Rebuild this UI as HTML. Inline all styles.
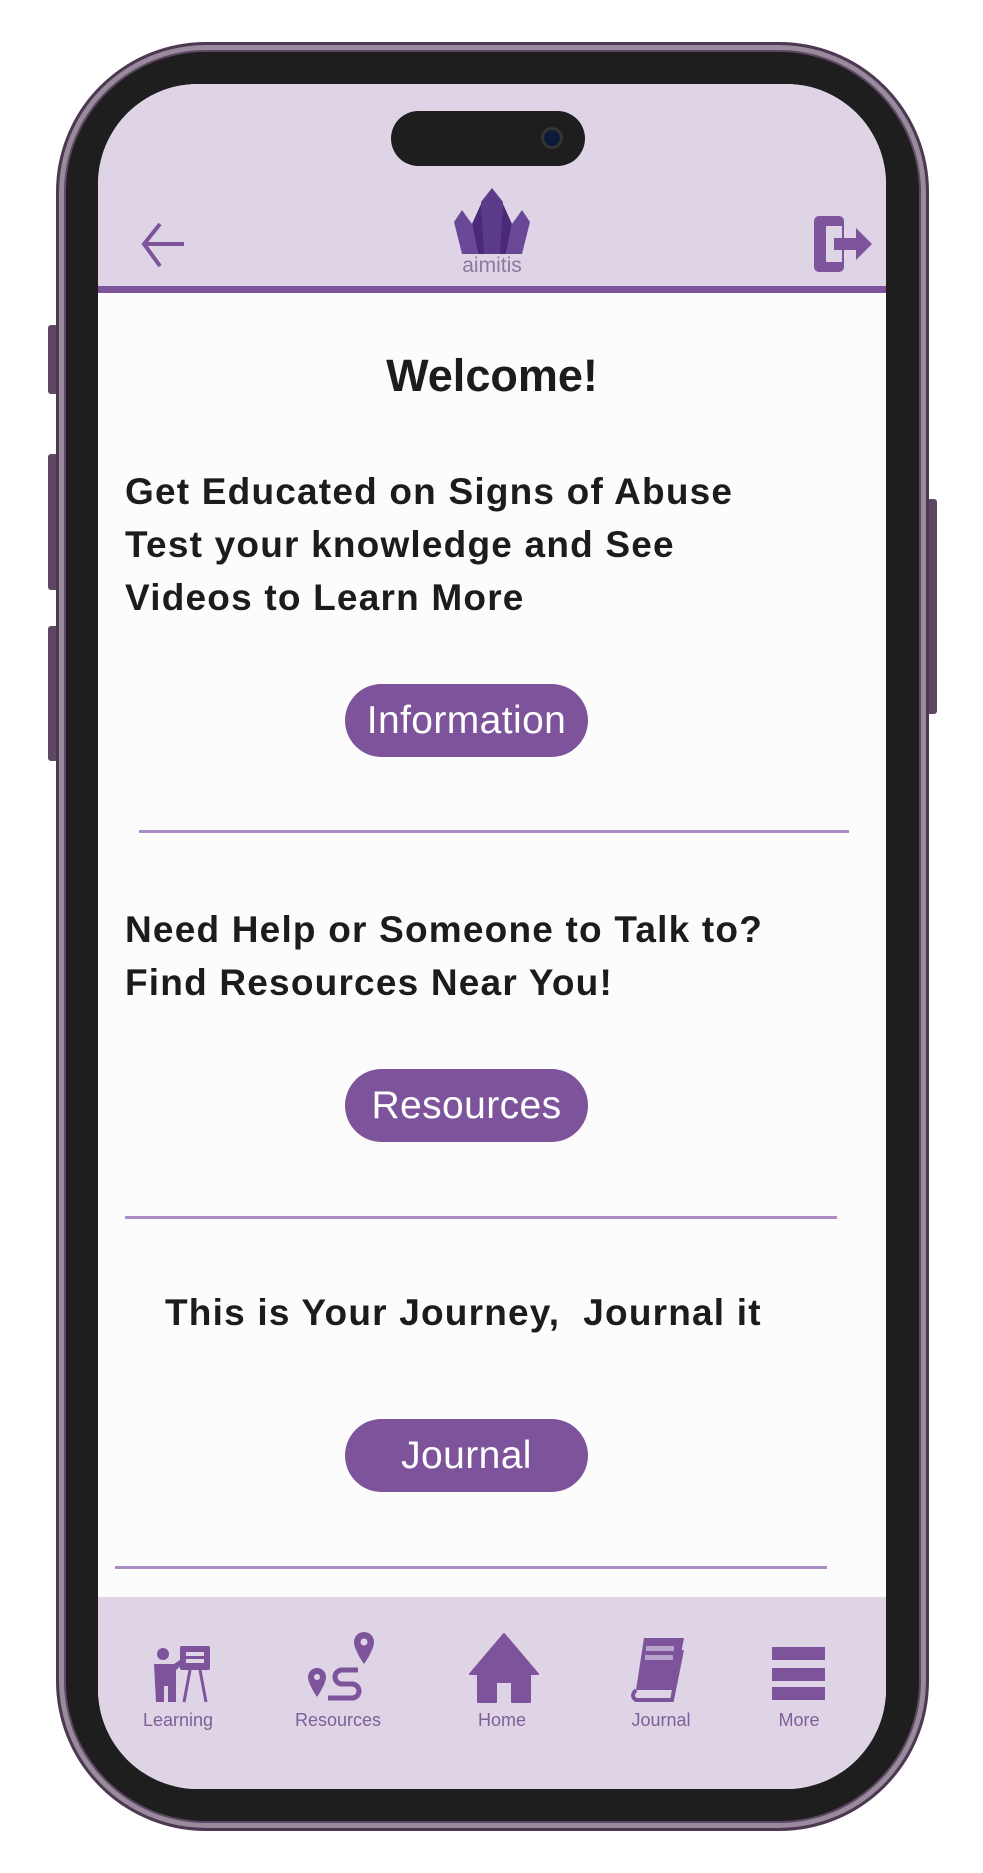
<!DOCTYPE html>
<html><head><meta charset="utf-8"><style>
*{margin:0;padding:0;box-sizing:border-box}
body{width:983px;height:1873px;background:#fff;position:relative;overflow:hidden;font-family:"Liberation Sans",sans-serif}
.abs{position:absolute}
.frame{left:56px;top:42px;width:873px;height:1789px;border-radius:150px;background:#5e4763;border:3px solid #4d3852;box-shadow:inset 0 0 0 5px #9a8a9d}
.bezel{left:66px;top:52px;width:853px;height:1769px;border-radius:140px;background:#1e1e1e}
.screen{left:98px;top:84px;width:788px;height:1705px;border-radius:100px;background:#fdfcfc;overflow:hidden}
.hdr{left:0;top:0;width:788px;height:209px;background:#dfd4e6;border-bottom:7px solid #7d539b}
.nav{left:0;top:1513px;width:788px;height:192px;background:#dfd4e6}
.island{left:293px;top:27px;width:194px;height:55px;border-radius:28px;background:#1e1e1e}
.txt{left:27px;color:#1c1c1c;font-size:37px;font-weight:bold;letter-spacing:1.2px;line-height:53px;white-space:nowrap}
.btn{left:247px;width:243px;height:73px;border-radius:37px;background:#7d539b;color:#fff;font-size:39px;letter-spacing:0.4px;text-align:center;line-height:73px}
.hr{height:3px;background:#a98bc6}
.lbl{top:1626px;width:120px;text-align:center;font-size:18px;color:#7d5f99}
.side{background:#5e4763;border-radius:3px}
</style></head><body>
<div class="abs side" style="left:48px;top:325px;width:10px;height:69px"></div>
<div class="abs side" style="left:48px;top:454px;width:10px;height:136px"></div>
<div class="abs side" style="left:48px;top:626px;width:10px;height:135px"></div>
<div class="abs side" style="left:927px;top:499px;width:10px;height:215px"></div>
<div class="abs frame"></div>
<div class="abs bezel"></div>
<div class="abs screen">
 <div class="abs hdr"></div>
 <div class="abs island"><div class="abs" style="left:150px;top:16px;width:22px;height:22px;border-radius:50%;background:#0c1a3a;border:3px solid #333"></div></div>
 <svg class="abs" style="left:42px;top:136px" width="48" height="50" viewBox="0 0 48 50"><path d="M20 4 L4 24 L20 46 M4 24 H44" stroke="#7d539b" stroke-width="4" fill="none"/></svg>
 <svg class="abs" style="left:352px;top:104px" width="84" height="86" viewBox="0 0 84 86"><path d="M42 0 L53 14 L52 66 L32 66 L31 14Z" fill="#5c3a8a"/><path d="M4 34 L12 22 L22 36 L28 66 L12 66Z" fill="#6b4797"/><path d="M80 34 L72 22 L62 36 L56 66 L72 66Z" fill="#6b4797"/><path d="M22 36 L31 16 L34 66 L28 66Z" fill="#4a2a78"/><path d="M62 36 L53 16 L50 66 L56 66Z" fill="#4a2a78"/><text x="42" y="84" text-anchor="middle" font-size="21" fill="#8a7aa0" font-family="Liberation Sans">aimitis</text></svg>
 <svg class="abs" style="left:714px;top:130px" width="62" height="60" viewBox="0 0 62 60"><rect x="2" y="2" width="30" height="56" rx="5" fill="#7d539b"/><rect x="14" y="12" width="16" height="36" fill="#dfd4e6"/><path d="M22 24 H44 V14 L60 30 L44 46 V36 H22Z" fill="#7d539b"/></svg>
 <div class="abs" style="left:0;width:788px;top:266px;text-align:center;font-weight:bold;font-size:45px;color:#1c1c1c">Welcome!</div>
 <div class="abs txt" style="top:381px">Get Educated on Signs of Abuse<br>Test your knowledge and See<br>Videos to Learn More</div>
 <div class="abs btn" style="top:600px">Information</div>
 <div class="abs hr" style="left:41px;top:746px;width:710px"></div>
 <div class="abs txt" style="top:819px">Need Help or Someone to Talk to?<br>Find Resources Near You!</div>
 <div class="abs btn" style="top:985px">Resources</div>
 <div class="abs hr" style="left:27px;top:1132px;width:712px"></div>
 <div class="abs txt" style="left:67px;top:1202px">This is Your Journey,&nbsp; Journal it</div>
 <div class="abs btn" style="top:1335px">Journal</div>
 <div class="abs hr" style="left:17px;top:1482px;width:712px"></div>
 <div class="abs nav"></div>
 <svg class="abs" style="left:54px;top:1560px" width="64" height="60" viewBox="0 0 64 60"><circle cx="11" cy="10" r="6" fill="#7d539b"/><path d="M2 20 H22 L34 12 L36 16 L24 26 V58 H16 V42 H12 V58 H4Z" fill="#7d539b"/><rect x="28" y="2" width="30" height="24" rx="2" fill="#7d539b"/><rect x="34" y="8" width="18" height="4" fill="#dfd4e6"/><rect x="34" y="15" width="18" height="4" fill="#dfd4e6"/><path d="M38 26 L32 58 M48 26 L54 58" stroke="#7d539b" stroke-width="3"/></svg>
 <svg class="abs" style="left:208px;top:1546px" width="74" height="72" viewBox="0 0 74 72"><path d="M11 38 a9 9 0 0 1 9 9 c0 7-9 20-9 20 s-9-13-9-20 a9 9 0 0 1 9-9z" fill="#7d539b"/><circle cx="11" cy="47" r="3" fill="#dfd4e6"/><path d="M58 2 a10 10 0 0 1 10 10 c0 8-10 22-10 22 s-10-14-10-22 a10 10 0 0 1 10-10z" fill="#7d539b"/><circle cx="58" cy="12" r="3.5" fill="#dfd4e6"/><path d="M52 40 H36 a7 7 0 0 0 0 14 H46 a7 7 0 0 1 0 14 H22" stroke="#7d539b" stroke-width="5" fill="none"/></svg>
 <svg class="abs" style="left:370px;top:1548px" width="72" height="72" viewBox="0 0 72 72"><path d="M36 2 L70 42 L62 42 V70 H44 V50 H28 V70 H10 V42 H2Z" fill="#7d539b" stroke="#7d539b" stroke-width="2" stroke-linejoin="round"/></svg>
 <svg class="abs" style="left:528px;top:1552px" width="66" height="68" viewBox="0 0 66 68"><path d="M18 2 H58 L48 54 H10 Z" fill="#7d539b"/><path d="M10 54 Q4 60 10 64 H46 L56 14" stroke="#7d539b" stroke-width="4" fill="none"/><rect x="20" y="10" width="28" height="5" fill="#b9a5cb"/><rect x="19" y="19" width="28" height="5" fill="#b9a5cb"/></svg>
 <div class="abs" style="left:674px;top:1563px;width:53px;height:13px;background:#7d539b"></div>
 <div class="abs" style="left:674px;top:1584px;width:53px;height:13px;background:#7d539b"></div>
 <div class="abs" style="left:674px;top:1603px;width:53px;height:13px;background:#7d539b"></div>
 <div class="abs lbl" style="left:20px">Learning</div>
 <div class="abs lbl" style="left:180px">Resources</div>
 <div class="abs lbl" style="left:344px">Home</div>
 <div class="abs lbl" style="left:503px">Journal</div>
 <div class="abs lbl" style="left:641px">More</div>
</div>
</body></html>
